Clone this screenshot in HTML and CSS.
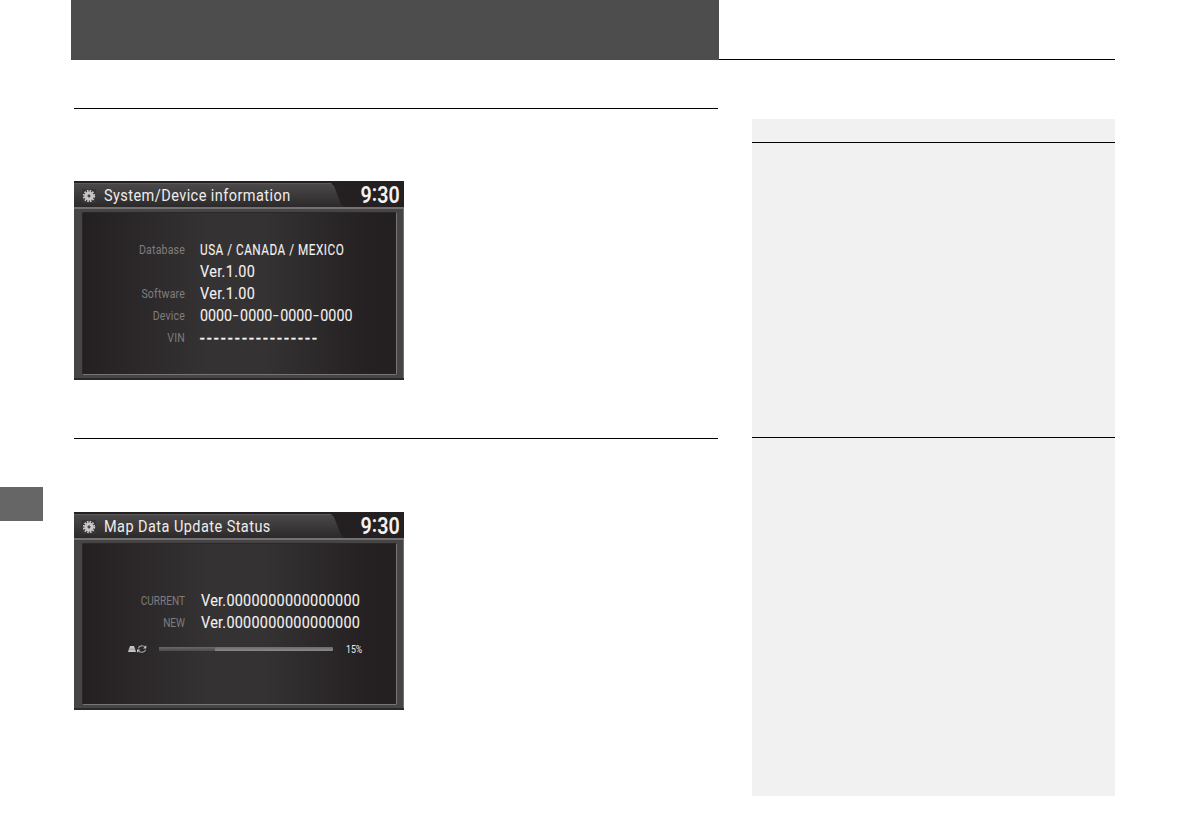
FILE: index.html
```html
<!DOCTYPE html>
<html lang="en">
<head>
    <meta charset="UTF-8">
    <meta name="viewport" content="width=device-width, initial-scale=1.0">
    <title>System/Device information</title>
    <link rel="stylesheet" href="styles.css">
</head>
<body>
    <header class="page-header">
        <div class="header-band"></div>
        <div class="header-line"></div>
    </header>
    <div class="page">
        <div class="margin"><div class="margin-tab"></div></div>
        <main class="content">
            <section class="topic">
                <div class="screen">
                    <div class="screen-top">
                        <div class="title-tab">
                            <svg class="gear" viewBox="0 0 14 14">
                                <circle cx="7" cy="7" r="5.1" fill="none" stroke="#c9c7c7" stroke-width="2.2" stroke-dasharray="1.55 1.12"/>
                                <circle cx="7" cy="7" r="3" fill="none" stroke="#c9c7c7" stroke-width="3.1"/>
                                <circle cx="7" cy="7" r="1.2" fill="#4a4848"/>
                            </svg>
                            <h2 class="title">System/Device information</h2>
                        </div>
                        <span class="clock">9<i>:</i>30</span>
                    </div>
                    <div class="screen-body">
                        <div class="display">
                            <dl class="info">
                                <dt>Database</dt>
                                <dd><span class="region">USA / CANADA / MEXICO</span></dd>
                                <dt></dt>
                                <dd><span class="version">Ver.1.00</span></dd>
                                <dt>Software</dt>
                                <dd><span class="version">Ver.1.00</span></dd>
                                <dt>Device</dt>
                                <dd><span class="device">0000<i>-</i>0000<i>-</i>0000<i>-</i>0000</span></dd>
                                <dt>VIN</dt>
                                <dd><span class="vin">-----------------</span></dd>
                            </dl>
                        </div>
                    </div>
                </div>
            </section>
            <section class="topic topic-update">
                <div class="screen screen-update">
                    <div class="screen-top">
                        <div class="title-tab">
                            <svg class="gear" viewBox="0 0 14 14">
                                <circle cx="7" cy="7" r="5.1" fill="none" stroke="#c9c7c7" stroke-width="2.2" stroke-dasharray="1.55 1.12"/>
                                <circle cx="7" cy="7" r="3" fill="none" stroke="#c9c7c7" stroke-width="3.1"/>
                                <circle cx="7" cy="7" r="1.2" fill="#4a4848"/>
                            </svg>
                            <h2 class="title">Map Data Update Status</h2>
                        </div>
                        <span class="clock">9<i>:</i>30</span>
                    </div>
                    <div class="screen-body">
                        <div class="display">
                            <dl class="info info-update">
                                <dt>CURRENT</dt>
                                <dd><span class="map-version">Ver.0000000000000000</span></dd>
                                <dt>NEW</dt>
                                <dd><span class="map-version">Ver.0000000000000000</span></dd>
                            </dl>
                            <div class="progress">
                                <svg class="sync" viewBox="0 0 20 10">
                                    <path d="M2 2h4l1 3 1 3H0l1-3z" fill="#c4c2c2"/>
                                    <path d="M0.5 5.2h7" stroke="#8d8b8b" stroke-width=".7"/>
                                    <path d="M10.2 4.4a4 3.5 0 0 1 7-1.3M17.6 5.6a4 3.5 0 0 1-7 1.3" fill="none" stroke="#a19f9f" stroke-width="1.2"/>
                                    <path d="M18.3 1.2v3.3h-3.3zM9 8.8V5.5h3.3z" fill="#c4c2c2"/>
                                </svg>
                                <div class="bar"><div class="bar-done" style="width: 32%"></div></div>
                                <span class="percent">15%</span>
                            </div>
                        </div>
                    </div>
                </div>
            </section>
        </main>
        <aside class="notes">
            <div class="notes-head"></div>
            <div class="notes-first"></div>
            <div class="notes-second"></div>
        </aside>
    </div>
</body>
</html>
```
FILE: styles.css
```css
* {
    box-sizing: border-box;
}

body {
    margin: 0;
    background-color: #fff;
    font-family: Roboto, "Liberation Sans", sans-serif;
    height: 838px;
    overflow: hidden;
}

.page-header {
    display: flex;
    height: 60px;
    padding-left: 71px;
}

.header-band {
    width: 648px;
    background-color: #4d4d4d;
}

.header-line {
    width: 396px;
    border-bottom: 1px solid #000;
}

.page {
    display: flex;
}

.margin {
    width: 74px;
    padding-top: 427px;
}

.margin-tab {
    width: 43px;
    height: 34px;
    background-color: #666;
}

.content {
    width: 644px;
    padding-top: 48px;
}

.topic {
    height: 330px;
    border-top: 1px solid #000;
    padding-top: 72px;
}

.topic-update {
    padding-top: 73px;
}

/* navigation screens */
.screen {
    display: flex;
    flex-direction: column;
    width: 330px;
    height: 199px;
    background-color: #242021;
    border-bottom: 2px solid #2b2829;
}

.screen-update {
    height: 198px;
}

.screen-top {
    display: flex;
    justify-content: space-between;
    height: 26px;
    padding-top: 2px;
}

.title-tab {
    display: flex;
    align-items: center;
    width: 270px;
    height: 24px;
    padding: 1px 0 0 8px;
    background: linear-gradient(#5c5a5b 1px, #4a4849 1px, #2c292a);
    clip-path: polygon(0 0, 257px 0, 260px 3px, 267px 21px, 270px 24px, 0 24px);
}

.gear {
    width: 14px;
    height: 14px;
    background-color: #383536;
}

.title {
    margin: 0 0 0 8px;
    color: #efeded;
    font-size: 16px;
    font-weight: 400;
    line-height: 20px;
    letter-spacing: .5px;
    white-space: nowrap;
    transform: scaleX(.905);
    transform-origin: left;
}

.clock {
    margin-right: 4px;
    color: #f3f1f1;
    font-size: 24px;
    font-weight: 600;
    line-height: 25px;
    transform: scaleX(.82);
    transform-origin: right;
}

.clock i {
    display: inline-block;
    font-style: normal;
    transform: translateY(-2px);
}

.screen-body {
    flex: 1;
    padding: 3px 6px 3px 8px;
    background-color: #464445;
    border-top: 2px solid #737172;
    border-right: 1px solid #737172;
}

.display {
    height: 100%;
    overflow: hidden;
    border: 1px solid #777576;
    border-top-color: #2b2829;
    border-left-color: #2b2829;
    border-radius: 2px;
    background: linear-gradient(90deg, #242021, #353233 40%, #353233 58%, #242021 92%);
}

.info {
    display: grid;
    grid-template-columns: 102px 1fr;
    column-gap: 15px;
    grid-auto-rows: 22px;
    margin: 26px 0 0;
    line-height: 22px;
}

.info-update {
    margin-top: 46px;
}

.info dt {
    color: #7f7d7e;
    font-size: 12px;
    text-align: right;
    letter-spacing: .2px;
    transform: scaleX(.88);
    transform-origin: right;
}

.info-update dt {
    letter-spacing: 0;
    transform: scaleX(.84);
}

.info dd {
    margin: 0;
    color: #f3f1f1;
    font-size: 16px;
    white-space: nowrap;
    -webkit-text-stroke: .1px #f3f1f1;
}

.info span,
.info i {
    display: inline-block;
    font-style: normal;
    transform-origin: left;
}

.info .region {
    font-size: 14px;
    letter-spacing: .6px;
    transform: scaleX(.84);
}

.version {
    letter-spacing: .4px;
    transform: scaleX(.9);
}

.map-version {
    margin-left: 1px;
    letter-spacing: .3px;
    transform: scaleX(.9);
}

.device {
    transform: scaleX(.892);
}

.device i {
    width: 9px;
    text-indent: .6px;
    transform: scaleX(1.4);
}

.vin {
    letter-spacing: 2.6px;
    -webkit-text-stroke: .4px #f3f1f1;
    transform: translateY(1px);
}

.progress {
    display: flex;
    align-items: center;
    height: 12px;
    margin-top: 9px;
    padding-left: 45px;
}

.sync {
    width: 20px;
    height: 10px;
}

.bar {
    width: 174px;
    height: 4px;
    margin-left: 11px;
    background: linear-gradient(#6c6a6b, #8b898a);
    border-radius: 1px;
}

.bar-done {
    height: 4px;
    background: linear-gradient(#6a6869, #4c4a4b);
}

.percent {
    margin-left: 13px;
    color: #f0eeee;
    font-size: 10px;
    transform: scaleX(.87);
    transform-origin: left;
}

/* side notes */
.notes {
    width: 363px;
    height: 677px;
    margin: 59px 0 0 34px;
    background-color: #f1f1f1;
}

.notes-head {
    height: 24px;
    border-bottom: 1px solid #000;
}

.notes-first {
    height: 295px;
    border-bottom: 1px solid #000;
}
```
